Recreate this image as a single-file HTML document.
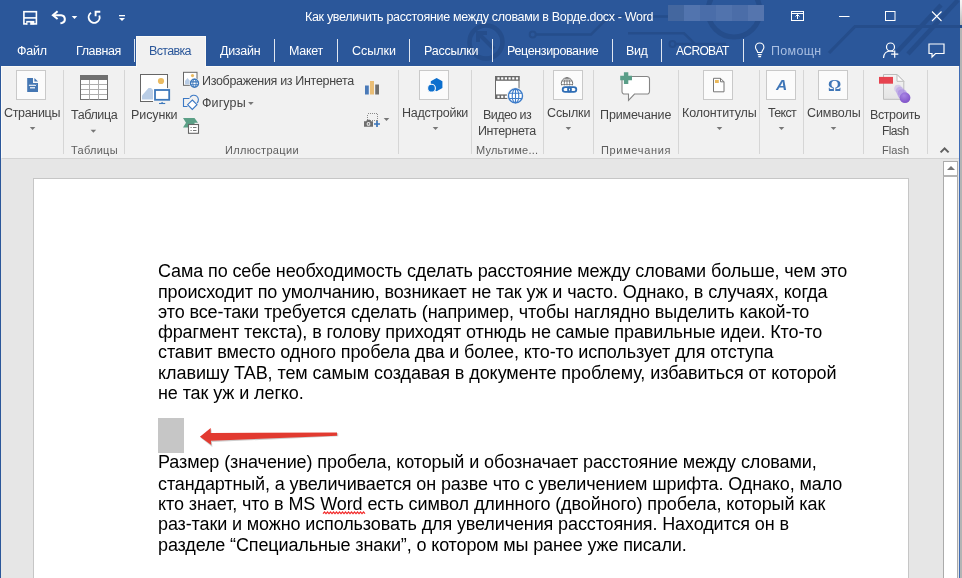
<!DOCTYPE html>
<html lang="ru"><head><meta charset="utf-8"><title>Word</title>
<style>
html,body{margin:0;padding:0;}
body{width:962px;height:578px;position:relative;overflow:hidden;background:#e6e6e6;font-family:"Liberation Sans",sans-serif;}
.a{position:absolute;}
.t{position:absolute;white-space:pre;will-change:transform;line-height:20px;height:20px;font-family:"Liberation Sans",sans-serif;}
.sep{position:absolute;width:1px;background:#d6d6d6;top:70px;height:84px;}
.tsep{position:absolute;width:1px;background:#dfe6f1;top:39px;height:23px;}
.box{position:absolute;width:28px;height:28px;top:70px;border:1px solid #c9c9c9;background:#fbfbfb;}
.arr{position:absolute;width:0;height:0;border-left:3px solid transparent;border-right:3px solid transparent;border-top:3px solid #777;}
svg{position:absolute;overflow:visible;}
</style></head><body>
<!-- title + tab bar -->
<div class="a" id="titlebar" style="left:0;top:0;width:962px;height:66px;background:#2b579a;"></div>
<!-- ribbon -->
<div class="a" id="ribbon" style="left:1px;top:66px;width:957px;height:91px;background:#f1f1f1;border-left:1px solid #fbfaf7;border-top:1px solid #fbfaf7;border-bottom:1px solid #d3d3d3;"></div>
<!-- active tab -->
<div class="a" style="left:136px;top:36px;width:68px;height:31px;background:#f1f1f1;border:1px solid #fbfaf7;border-bottom:none;"></div>
<!-- document page -->
<div class="a" id="page" style="left:33px;top:178px;width:874px;height:420px;background:#fff;border:1px solid #c6c6c6;"></div>
<!-- scrollbar -->
<div class="a" style="left:943px;top:161px;width:13px;height:430px;background:#fff;border:1px solid #ababab;"></div>
<div class="a" style="left:943px;top:161px;width:13px;height:13px;background:#fff;border:1px solid #ababab;border-bottom:2px solid #b4b4b4;"></div>
<div class="a" style="left:946.500px;top:166px;width:0;height:0;border-left:4px solid transparent;border-right:4px solid transparent;border-bottom:4px solid #777;"></div>
<!-- window borders -->
<div class="a" style="left:0;top:66px;width:1px;height:512px;background:#2b579a;"></div>
<div class="a" style="left:959px;top:66px;width:1px;height:512px;background:#3f6cb5;"></div>
<div class="a" style="left:960px;top:66px;width:2px;height:512px;background:#b4b4b4;"></div>
<div class="a" style="left:960px;top:0;width:2px;height:66px;background:linear-gradient(#f6f6f6 0px,#f0f0f0 4px,#b4b4b4 26px,#b4b4b4 66px);"></div>
<!-- ribbon separators -->
<div class="sep" style="left:63px"></div>
<div class="sep" style="left:124px"></div>
<div class="sep" style="left:398px"></div>
<div class="sep" style="left:471px"></div>
<div class="sep" style="left:543px"></div>
<div class="sep" style="left:593px"></div>
<div class="sep" style="left:678px"></div>
<div class="sep" style="left:759px"></div>
<div class="sep" style="left:803px"></div>
<div class="sep" style="left:863px"></div>
<div class="sep" style="left:927px"></div>
<!-- icon boxes -->
<div class="box" style="left:16px"></div>
<div class="box" style="left:419px"></div>
<div class="box" style="left:553px"></div>
<div class="box" style="left:703px"></div>
<div class="box" style="left:766px"></div>
<div class="box" style="left:818px"></div>
<!-- dropdown arrows -->
<svg style="left:0;top:0" width="962" height="160" viewBox="0 0 962 160"><path d="M29.8 127h5.600l-2.800 3z" fill="#777"/><path d="M90.6 129.7h5.600l-2.800 3z" fill="#777"/><path d="M432.7 127h5.600l-2.800 3z" fill="#777"/><path d="M565.6 127h5.600l-2.800 3z" fill="#777"/><path d="M716.7 127h5.600l-2.800 3z" fill="#777"/><path d="M778.7 127h5.600l-2.800 3z" fill="#777"/><path d="M830.7 127h5.600l-2.800 3z" fill="#777"/><path d="M248.1 102h5.600l-2.800 3z" fill="#777"/><path d="M383.7 118h5.600l-2.800 3z" fill="#777"/><path d="M71.7 16h5.600l-2.800 3z" fill="#fff"/></svg>
<!-- QAT icons -->
<svg style="left:0;top:0" width="962" height="66" viewBox="0 0 962 66">
 <!-- faint circuit pattern -->
 <g fill="none" stroke="#254d8b" stroke-width="3.200">
  <path d="M962 26.500H855L829 53"/>
  <path d="M941 5L897 52" stroke-width="4.500"/>
  <path d="M958 0L908 54" stroke-width="4.500"/>
  <circle cx="486" cy="42" r="16.500" stroke-width="4.500"/>
  <path d="M494 49L479 34M478 42v-9h9" stroke-width="4"/>
  <circle cx="532.700" cy="34.600" r="3" stroke-width="2"/>
  <path d="M536 34.600H591L609 16.500H668" stroke-width="2.500"/>
  <path d="M628 33.300H684L695 44" stroke-width="2.500"/>
  <circle cx="672.500" cy="44" r="3" stroke-width="2"/>
  <path d="M676 44H726" stroke-width="2.500"/>
  <circle cx="734" cy="11" r="26" stroke-width="5"/>
 </g>
 <!-- blurred user name -->
 <g>
  <rect x="668" y="5" width="17" height="16" fill="#44679f"/>
  <rect x="684" y="5" width="16" height="16" fill="#5274ae"/>
  <rect x="700" y="5" width="16" height="16" fill="#4a6da9"/>
  <rect x="716" y="5" width="16" height="16" fill="#5173ad"/>
  <rect x="732" y="5" width="16" height="16" fill="#4b6da8"/>
  <rect x="748" y="5" width="16" height="16" fill="#5575ae"/>
 </g>
 <!-- save -->
 <g fill="none" stroke="#fff" stroke-width="1.6">
  <rect x="23.9" y="11.7" width="12.5" height="12.2"/>
  <path d="M24 17.9h12.4"/>
 </g>
 <path d="M26.200 20.900h8.200v3.600h-8.200z" fill="#fff"/>
 <rect x="27.500" y="22.500" width="2.700" height="2.400" fill="#2b579a"/>
 <!-- undo -->
 <g fill="none" stroke="#fff" stroke-width="2" stroke-linejoin="miter">
  <path d="M57.6 11.2 L52.9 15.2 L57.6 19"/>
  <path d="M53.5 15.3 H61.2 a3.9 3.9 0 0 1 0.6 7.7 L60.4 23.2"/>
 </g>
 <!-- redo -->
 <g fill="none" stroke="#fff" stroke-width="1.9">
  <path d="M91 12.800 A5.500 5.500 0 1 0 99.300 15.500"/>
  <path d="M95.6 16.3 V11.7 H100.3"/>
 </g>
 <!-- customize QAT -->
 <rect x="119" y="15" width="6" height="1.3" fill="#fff"/>
 <path d="M119 18h6l-3 3z" fill="#fff"/>
 <!-- ribbon display options -->
 <g fill="none" stroke="#fff" stroke-width="1">
  <rect x="791.5" y="11.5" width="12" height="9"/>
  <path d="M791.5 13.5h12" />
  <path d="M797.5 19v-4.5M795.5 16.5l2-2 2 2"/>
 </g>
 <path d="M839 16.5h10.5" stroke="#fff" stroke-width="1"/>
 <rect x="885.5" y="11.5" width="9.5" height="9" fill="none" stroke="#fff" stroke-width="1"/>
 <path d="M932 11.5l9.5 9.5M941.5 11.5l-9.5 9.5" stroke="#fff" stroke-width="1.1"/>
 <!-- lightbulb -->
 <g fill="none" stroke="#fff" stroke-width="1.1">
  <path d="M757.7 52.5 c0-2 -2.2-2.8 -2.2-5.3 a4.2 4.2 0 0 1 8.4 0 c0 2.5-2.2 3.3-2.2 5.3z"/>
  <path d="M757.8 54.6h3.8M758.3 56.6h2.8"/>
 </g>
 <!-- share -->
 <g fill="none" stroke="#fff" stroke-width="1.2">
  <circle cx="890.5" cy="47" r="4"/>
  <path d="M883.500 58c0.300-4.500 3-7 7-7c1.300 0 2.300 0.200 3.200 0.700"/>
  <path d="M894.700 50.500v7.200M891.100 54.100h7.200"/>
 </g>
 <!-- comments -->
 <path d="M929 44h15v9.5h-8.5l-3.5 3.5v-3.5h-3z" fill="none" stroke="#fff" stroke-width="1.2"/>
</svg>
<!-- tab separators -->
<div class="tsep" style="left:134px"></div>
<div class="tsep" style="left:274px"></div>
<div class="tsep" style="left:337px"></div>
<div class="tsep" style="left:409px"></div>
<div class="tsep" style="left:492px"></div>
<div class="tsep" style="left:612px"></div>
<div class="tsep" style="left:661px"></div>
<div class="tsep" style="left:743px"></div>
<!-- ribbon icons -->
<svg style="left:0;top:65px" width="962" height="95" viewBox="0 65 962 95">
 <!-- pages icon -->
 <path d="M27.200 78H33V83H38V92H27.200z" fill="#4577b3"/>
 <path d="M34.400 78L38 81.600H34.400z" fill="#4577b3"/>
 <path d="M29 86l1-1.300 1 1.300 1-1.300 1 1.300 1-1.300 1 1.300 1-1.300" fill="none" stroke="#fff" stroke-width="0.900"/>
 <path d="M30 87.800H35" stroke="#fff" stroke-width="1.200"/>
 <!-- table icon -->
 <rect x="80.500" y="75.500" width="27" height="24" fill="#fff" stroke="#707070" stroke-width="1"/>
 <path d="M89.500 80v19.500M98.500 80v19.500M81 84.500h26M81 89.500h26M81 94.500h26" stroke="#adadad" stroke-width="1"/>
 <rect x="80" y="75" width="28" height="5" fill="#707070"/>
 <!-- pictures icon -->
 <rect x="140.500" y="74.500" width="27" height="27" fill="#fff" stroke="#666" stroke-width="1"/>
 <circle cx="161" cy="81" r="3.100" fill="#eabb62"/>
 <path d="M142 99.500V95.500L148.500 88H151L153.500 90.500V99.500z" fill="#b9cde6"/>
 <rect x="153" y="88" width="18.500" height="17" fill="#f1f1f1"/>
 <rect x="153" y="88" width="14" height="13" fill="#fff"/>
 <rect x="155" y="90" width="14.200" height="9.800" fill="#fff" stroke="#3d78bb" stroke-width="1.800"/>
 <path d="M159 103.500h6.200" stroke="#3d78bb" stroke-width="1.100"/>
 <path d="M161 103l1.100-1.300 1.100 1.300z" fill="#3d78bb"/>
 <!-- online pictures -->
 <rect x="183.500" y="72.300" width="13.500" height="13" fill="#fff" stroke="#666" stroke-width="1"/>
 <circle cx="192.500" cy="75.600" r="1.600" fill="#eabb62"/>
 <path d="M185 84.500v-3.500l2.500-3 2.500 3v3.500z" fill="#b9cde6"/>
 <circle cx="194.500" cy="83.300" r="5.300" fill="#f1f1f1"/>
 <circle cx="194.500" cy="83.300" r="4" fill="#fff" stroke="#3d78bb" stroke-width="1.400"/>
 <path d="M190.500 81.900h8M190.500 84.800h8" stroke="#3d78bb" stroke-width="1.100"/>
 <ellipse cx="194.500" cy="83.300" rx="1.700" ry="4" fill="none" stroke="#3d78bb" stroke-width="1"/>
 <!-- shapes -->
 <path d="M189.500 98.500h-6v8h4" fill="none" stroke="#3b78c4" stroke-width="1.100"/>
 <path d="M190 97.500a4.500 4.500 0 1 1 7 5.500" fill="none" stroke="#3b78c4" stroke-width="1.100"/>
 <path d="M192.300 100l4.700 4.700-4.700 4.700-4.700-4.700z" fill="#fff" stroke="#3b78c4" stroke-width="1.100"/>
 <!-- smartart -->
 <path d="M183 118h11.500l3.500 4.700h-3.500v1.600h-6.500v3.200h-5l3-4.700z" fill="#5b9f86"/>
 <rect x="188.500" y="124.500" width="10" height="8.800" fill="#fff" stroke="#666" stroke-width="1.100"/>
 <path d="M190.500 127.500h1.200M193 127.500h3.500M190.500 130.500h1.200M193 130.500h3.500" stroke="#777" stroke-width="1"/>
 <!-- chart -->
 <rect x="365" y="85.500" width="3.800" height="9" fill="#4a7ab8"/>
 <rect x="370" y="81" width="4" height="13.500" fill="#e9bd75"/>
 <rect x="375.200" y="84.500" width="3.800" height="10" fill="#6e6e6e"/>
 <!-- screenshot -->
 <rect x="367.500" y="113.500" width="10" height="7" fill="none" stroke="#8a8a8a" stroke-width="1" stroke-dasharray="1 1" shape-rendering="crispEdges"/>
 <path d="M364 121.200h2.200l0.900-1.500h2.800l0.900 1.500h2.200v5.500h-9z" fill="#6e6e6e"/>
 <circle cx="368.500" cy="123.900" r="1.900" fill="#f1f1f1"/>
 <circle cx="368.500" cy="123.900" r="0.900" fill="#6e6e6e"/>
 <path d="M377 121v6M374 124h6" stroke="#3a74b8" stroke-width="1.700"/>
 <!-- addins -->
 <path d="M436.600 77.900l5.800 3.350v6.700l-5.800 3.350-5.800-3.350v-6.700z" fill="#0c6fce"/>
 <circle cx="431.500" cy="88.200" r="3.900" fill="#0c6fce" stroke="#fbfbfb" stroke-width="1.100"/>
 <!-- online video -->
 <rect x="495.500" y="76.500" width="23.500" height="22" fill="#fff" stroke="#6a6a6a" stroke-width="1"/>
 <rect x="495" y="76" width="24.500" height="4.800" fill="#6a6a6a"/>
 <rect x="495" y="94.400" width="24.500" height="4.600" fill="#6a6a6a"/>
 <g fill="#fff"><rect x="497.4" y="77.300" width="2.200" height="2.200"/><rect x="497.4" y="95.700" width="2.200" height="2.200"/><rect x="501.1" y="77.300" width="2.200" height="2.200"/><rect x="501.1" y="95.700" width="2.200" height="2.200"/><rect x="504.8" y="77.300" width="2.200" height="2.200"/><rect x="504.8" y="95.700" width="2.200" height="2.200"/><rect x="508.5" y="77.300" width="2.200" height="2.200"/><rect x="508.5" y="95.700" width="2.200" height="2.200"/><rect x="512.2" y="77.300" width="2.200" height="2.200"/><rect x="512.2" y="95.700" width="2.200" height="2.200"/><rect x="515.9" y="77.300" width="2.200" height="2.200"/><rect x="515.9" y="95.700" width="2.200" height="2.200"/></g>
 <circle cx="515.500" cy="95.900" r="8.700" fill="#f1f1f1"/>
 <path d="M507 88h8v11h-8z" fill="#fff" opacity="0"/>
 <circle cx="515.500" cy="95.900" r="7" fill="#fff" stroke="#3d7cc9" stroke-width="1.400"/>
 <ellipse cx="515.500" cy="95.900" rx="3.300" ry="7" fill="none" stroke="#3d7cc9" stroke-width="1.100"/>
 <path d="M515.500 89v14M509 93.300h13M509 98.500h13" stroke="#3d7cc9" stroke-width="1.100"/>
 <!-- links -->
 <circle cx="567" cy="83.400" r="5.700" fill="#fff" stroke="#707070" stroke-width="1"/>
 <path d="M567 77.700v8M562 81h10M561.500 84.700h11" stroke="#707070" stroke-width="0.900"/>
 <ellipse cx="567" cy="83.400" rx="2.700" ry="5.700" fill="none" stroke="#707070" stroke-width="0.900"/>
 <rect x="560" y="85.400" width="19" height="8.500" fill="#fbfbfb"/>
 <rect x="562.700" y="87.100" width="8.300" height="4.800" rx="2.400" fill="none" stroke="#2e6db5" stroke-width="1.800"/>
 <rect x="568" y="87.100" width="8.300" height="4.800" rx="2.400" fill="none" stroke="#2e6db5" stroke-width="1.800"/>
 <!-- comment -->
 <path d="M624.500 76.500h22.500a2.500 2.500 0 0 1 2.500 2.500v12.500a2.500 2.500 0 0 1-2.500 2.500h-12.500l-6 6.300v-6.300h-4a2.500 2.500 0 0 1-2.500-2.500v-12.500a2.500 2.500 0 0 1 2.500-2.500z" fill="#fff" stroke="#858585" stroke-width="1.100"/>
 <path d="M626.100 72.200v11.700M620.200 78h11.800" stroke="#5a9e88" stroke-width="4.400"/>
 <!-- header/footer -->
 <path d="M713.500 78.300h7l3.500 3.500v10h-10.500z" fill="#fff" stroke="#777" stroke-width="1"/>
 <path d="M720.500 78.300v3.500h3.500" fill="none" stroke="#777" stroke-width="1"/>
 <rect x="715" y="80" width="3.800" height="3" fill="#eab95c"/>
 <!-- flash -->
 <defs>
  <radialGradient id="pb" cx="0.4" cy="0.3" r="0.8"><stop offset="0" stop-color="#a784e4"/><stop offset="1" stop-color="#7a4cc4"/></radialGradient>
  <linearGradient id="pg" x1="0" y1="0" x2="0" y2="1"><stop offset="0" stop-color="#f4f4f4"/><stop offset="1" stop-color="#e4e4e4"/></linearGradient>
 </defs>
 <path d="M883.500 74.500h13.500l6.800 6.800v18h-20.300z" fill="url(#pg)" stroke="#bcbcbc" stroke-width="1"/>
 <path d="M897 74.500v6.800h6.800z" fill="#fcfcfc" stroke="#bcbcbc" stroke-width="1"/>
 <rect x="879" y="76.900" width="14" height="6.800" fill="#e6434f"/>
 <circle cx="898" cy="88.500" r="3.800" fill="#c3b0e8" opacity="0.550"/>
 <circle cx="900" cy="91" r="4.200" fill="#b69ee6" opacity="0.600"/>
 <circle cx="902.200" cy="94" r="4.800" fill="#a98de2" opacity="0.700"/>
 <circle cx="905" cy="97.700" r="5.400" fill="url(#pb)"/>
 <!-- collapse chevron -->
 <path d="M940.600 152.400l4-4 4 4" fill="none" stroke="#606060" stroke-width="2"/>
</svg>
<!-- text icon A and omega (real text) -->
<div class="t" style="left:775.500px;top:73px;font-size:15.500px;font-weight:bold;font-style:italic;color:#3f76b7;line-height:24px;height:24px;">A</div>
<div class="t" style="left:827.500px;top:74px;font-size:16.500px;font-weight:bold;color:#3f76b7;line-height:24px;height:24px;font-family:'Liberation Serif',serif;">Ω</div>
<!-- doc shapes -->
<div class="a" style="left:158px;top:418px;width:26px;height:34.500px;background:#c6c6c6;"></div>
<svg style="left:190px;top:420px" width="160" height="35" viewBox="190 420 160 35">
 <path d="M201.300 438.200l10.200-8.900 0.200 5.100 126.500-1.200 0.100 3-126.300 5.900 0.300 4.900z" fill="#b9b9b9" opacity="0.700"/>
 <path d="M199.900 436.800l10.800-8.900 0.100 5.100 126.200-0.400 0.100 3.200-126.200 5 0.400 4.300z" fill="#e23a30"/>
</svg>
<!-- squiggle under Word -->
<svg style="left:322.500px;top:511px" width="44" height="5" viewBox="0 0 44 5">
 <path d="M0 2.6l1.5 -1.6l1.5 1.6l1.5 -1.6l1.5 1.6l1.5 -1.6l1.5 1.6l1.5 -1.6l1.5 1.6l1.5 -1.6l1.5 1.6l1.5 -1.6l1.5 1.6l1.5 -1.6l1.5 1.6l1.5 -1.6l1.5 1.6l1.5 -1.6l1.5 1.6l1.5 -1.6l1.5 1.6l1.5 -1.6l1.5 1.6l1.5 -1.6l1.5 1.6l1.5 -1.6l1.5 1.6l1.5 -1.6l1.5 1.6" fill="none" stroke="#f22c2c" stroke-width="1.200"/>
</svg>

<div class="t" style="left:304.50px;top:7px;font-size:12.5px;letter-spacing:-0.322px;color:#fff;">Как увеличить расстояние между словами в Ворде.docx - Word</div>
<div class="t" style="left:17.04px;top:41px;font-size:12.5px;letter-spacing:-0.218px;color:#fff;">Файл</div>
<div class="t" style="left:75.50px;top:41px;font-size:12.5px;letter-spacing:-0.385px;color:#fff;">Главная</div>
<div class="t" style="left:148.50px;top:41px;font-size:12.5px;letter-spacing:-0.668px;color:#2b579a;">Вставка</div>
<div class="t" style="left:220.14px;top:41px;font-size:12.5px;letter-spacing:-0.290px;color:#fff;">Дизайн</div>
<div class="t" style="left:288.50px;top:41px;font-size:12.5px;letter-spacing:-0.288px;color:#fff;">Макет</div>
<div class="t" style="left:352.16px;top:41px;font-size:12.5px;letter-spacing:-0.017px;color:#fff;">Ссылки</div>
<div class="t" style="left:423.50px;top:41px;font-size:12.5px;letter-spacing:-0.232px;color:#fff;">Рассылки</div>
<div class="t" style="left:507.02px;top:41px;font-size:12.5px;letter-spacing:-0.362px;color:#fff;">Рецензирование</div>
<div class="t" style="left:626.42px;top:41px;font-size:12.5px;letter-spacing:-0.407px;color:#fff;">Вид</div>
<div class="t" style="left:675.80px;top:41px;font-size:12px;letter-spacing:-0.645px;color:#fff;">ACROBAT</div>
<div class="t" style="left:770.60px;top:41px;font-size:12.5px;letter-spacing:0.305px;color:#a9bfe2;">Помощн</div>
<div class="t" style="left:3.86px;top:103px;font-size:12.5px;letter-spacing:-0.325px;color:#444;">Страницы</div>
<div class="t" style="left:70.65px;top:105px;font-size:12.5px;letter-spacing:-0.404px;color:#444;">Таблица</div>
<div class="t" style="left:130.78px;top:105px;font-size:12.5px;letter-spacing:-0.096px;color:#444;">Рисунки</div>
<div class="t" style="left:201.80px;top:71px;font-size:12.5px;letter-spacing:-0.323px;color:#444;">Изображения из Интернета</div>
<div class="t" style="left:202.48px;top:93px;font-size:12.5px;letter-spacing:0.107px;color:#444;">Фигуры</div>
<div class="t" style="left:402.02px;top:103px;font-size:12.5px;letter-spacing:-0.250px;color:#444;">Надстройки</div>
<div class="t" style="left:483.02px;top:105px;font-size:12.5px;letter-spacing:-0.573px;color:#444;">Видео из</div>
<div class="t" style="left:477.50px;top:121px;font-size:12.5px;letter-spacing:-0.388px;color:#444;">Интернета</div>
<div class="t" style="left:547.32px;top:103px;font-size:12.5px;letter-spacing:-0.119px;color:#444;">Ссылки</div>
<div class="t" style="left:600.14px;top:105px;font-size:12.5px;letter-spacing:-0.106px;color:#444;">Примечание</div>
<div class="t" style="left:681.65px;top:103px;font-size:12.5px;letter-spacing:-0.133px;color:#444;">Колонтитулы</div>
<div class="t" style="left:767.56px;top:103px;font-size:12.5px;letter-spacing:-0.668px;color:#444;">Текст</div>
<div class="t" style="left:806.68px;top:103px;font-size:12.5px;letter-spacing:-0.071px;color:#444;">Символы</div>
<div class="t" style="left:869.60px;top:105px;font-size:12.5px;letter-spacing:-0.403px;color:#444;">Встроить</div>
<div class="t" style="left:881.94px;top:121px;font-size:12px;letter-spacing:-0.561px;color:#444;">Flash</div>
<div class="t" style="left:71.28px;top:140px;font-size:11px;letter-spacing:0.269px;color:#5e5e5e;">Таблицы</div>
<div class="t" style="left:225.03px;top:140px;font-size:11px;letter-spacing:0.317px;color:#5e5e5e;">Иллюстрации</div>
<div class="t" style="left:476.03px;top:140px;font-size:11px;letter-spacing:0.219px;color:#5e5e5e;">Мультиме...</div>
<div class="t" style="left:601.35px;top:140px;font-size:11px;letter-spacing:0.657px;color:#5e5e5e;">Примечания</div>
<div class="t" style="left:882.02px;top:140px;font-size:11px;letter-spacing:0.074px;color:#5e5e5e;">Flash</div>
<div class="t" style="left:158.07px;top:261px;font-size:18px;letter-spacing:-0.112px;color:#000;">Сама по себе необходимость сделать расстояние между словами больше, чем это</div>
<div class="t" style="left:157.64px;top:282px;font-size:18px;letter-spacing:-0.127px;color:#000;">происходит по умолчанию, возникает не так уж и часто. Однако, в случаях, когда</div>
<div class="t" style="left:157.98px;top:302px;font-size:18px;letter-spacing:-0.099px;color:#000;">это все-таки требуется сделать (например, чтобы наглядно выделить какой-то</div>
<div class="t" style="left:158.27px;top:322px;font-size:18px;letter-spacing:-0.112px;color:#000;">фрагмент текста), в голову приходят отнюдь не самые правильные идеи. Кто-то</div>
<div class="t" style="left:158.32px;top:342px;font-size:18px;letter-spacing:-0.103px;color:#000;">ставит вместо одного пробела два и более, кто-то использует для отступа</div>
<div class="t" style="left:157.68px;top:363px;font-size:18px;letter-spacing:-0.067px;color:#000;">клавишу TAB, тем самым создавая в документе проблему, избавиться от которой</div>
<div class="t" style="left:157.64px;top:383px;font-size:18px;letter-spacing:-0.093px;color:#000;">не так уж и легко.</div>
<div class="t" style="left:157.64px;top:452px;font-size:18px;letter-spacing:-0.097px;color:#000;">Размер (значение) пробела, который и обозначает расстояние между словами,</div>
<div class="t" style="left:158.23px;top:474px;font-size:18px;letter-spacing:-0.114px;color:#000;">стандартный, а увеличивается он разве что с увеличением шрифта. Однако, мало</div>
<div class="t" style="left:157.72px;top:494px;font-size:18px;letter-spacing:-0.090px;color:#000;">кто знает, что в MS Word есть символ длинного (двойного) пробела, который как</div>
<div class="t" style="left:157.72px;top:514px;font-size:18px;letter-spacing:-0.119px;color:#000;">раз-таки и можно использовать для увеличения расстояния. Находится он в</div>
<div class="t" style="left:157.64px;top:535px;font-size:18px;letter-spacing:-0.128px;color:#000;">разделе “Специальные знаки”, о котором мы ранее уже писали.</div>
</body></html>
